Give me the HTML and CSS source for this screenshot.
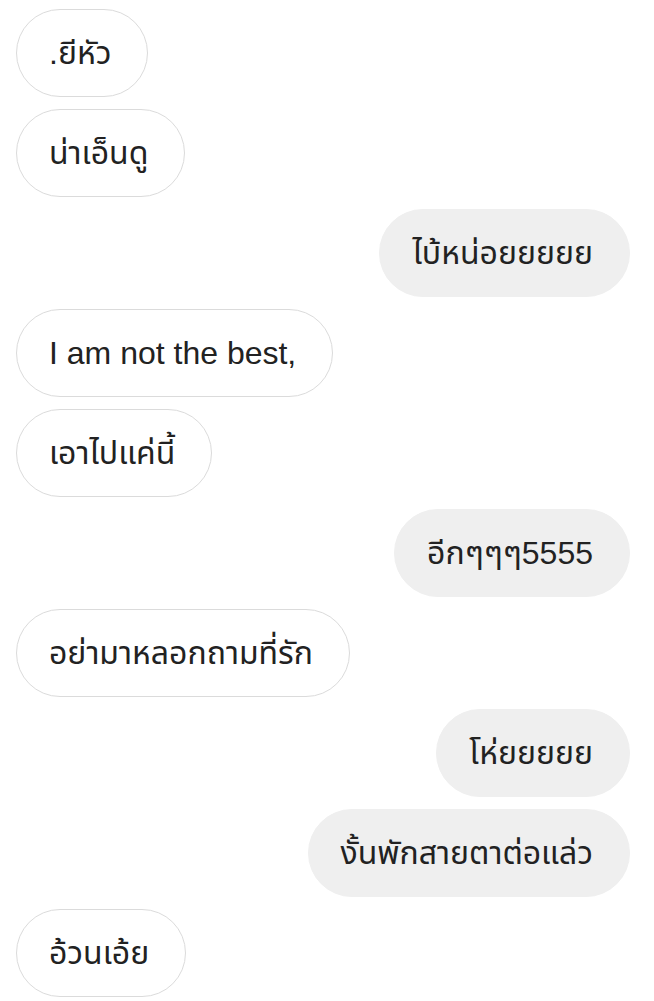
FILE: index.html
```html
<!DOCTYPE html>
<html lang="th">
<head>
<meta charset="utf-8">
<link rel="stylesheet" href="styles.css">
</head>
<body>
<div class="chat">
  <div class="msg in">.ยีหัว</div>
  <div class="msg in">น่าเอ็นดู</div>
  <div class="msg out">ไบ้หน่อยยยยย</div>
  <div class="msg in">I am not the best,</div>
  <div class="msg in">เอาไปแค่นี้</div>
  <div class="msg out">อีกๆๆๆ5555</div>
  <div class="msg in">อย่ามาหลอกถามที่รัก</div>
  <div class="msg out">โห่ยยยยย</div>
  <div class="msg out">งั้นพักสายตาต่อแล่ว</div>
  <div class="msg in">อ้วนเอ้ย</div>
</div>
</body>
</html>
```
FILE: styles.css
```css
html, body {
  margin: 0;
  padding: 0;
  background: #ffffff;
}
.chat {
  display: flex;
  flex-direction: column;
  gap: 12px;
  padding: 9px 24px 0 16px;
  font-family: "Liberation Sans", "Noto Sans Thai", "Noto Sans", sans-serif;
  font-size: 32px;
  color: #222222;
}
.msg {
  box-sizing: border-box;
  height: 88px;
  line-height: 40px;
  padding: 23px 36px 23px 32px;
  border-radius: 44px;
  white-space: nowrap;
}
.in {
  align-self: flex-start;
  border: 1.5px solid #dbdbdb;
  background: #ffffff;
}
.out {
  align-self: flex-end;
  border: 1.5px solid #efefef;
  background: #efefef;
}
```
